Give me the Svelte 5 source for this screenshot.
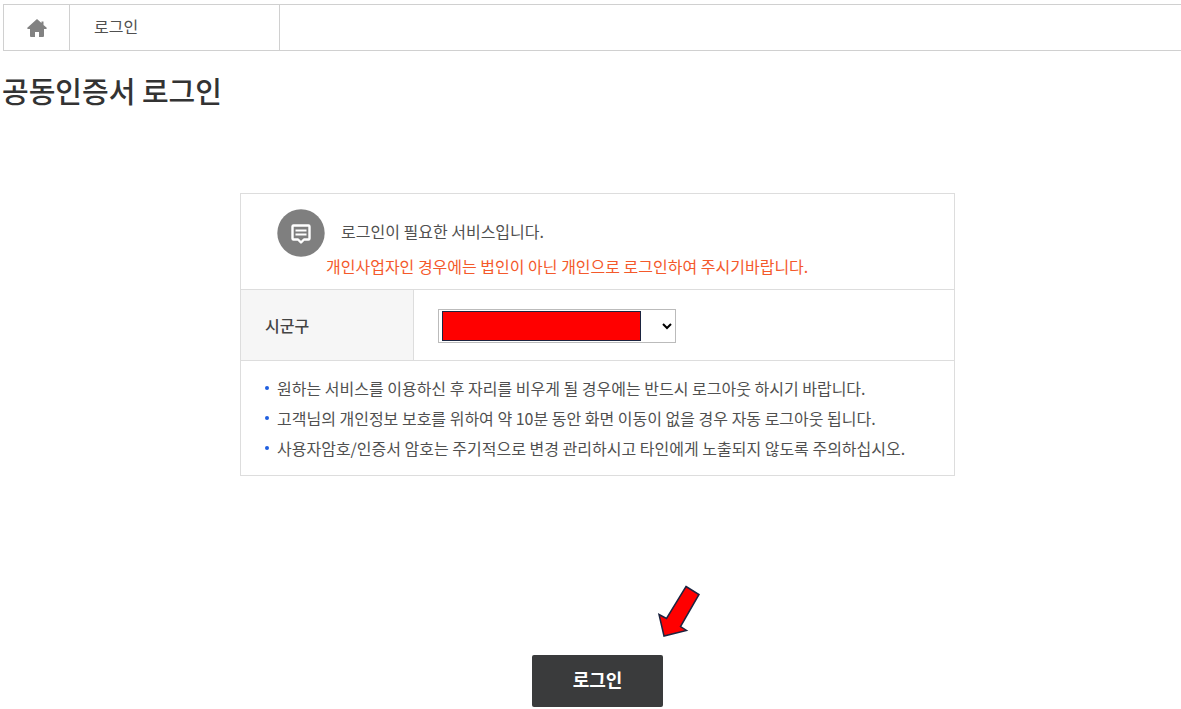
<script>
  let district = $state('');
  const notes = [
    '원하는 서비스를 이용하신 후 자리를 비우게 될 경우에는 반드시 로그아웃 하시기 바랍니다.',
    '고객님의 개인정보 보호를 위하여 약 10분 동안 화면 이동이 없을 경우 자동 로그아웃 됩니다.',
    '사용자암호/인증서 암호는 주기적으로 변경 관리하시고 타인에게 노출되지 않도록 주의하십시오.'
  ];
</script>

<nav class="crumbs">
  <a class="home" href="#home" aria-label="홈">
    <svg width="20" height="18" viewBox="0 0 20 18" aria-hidden="true">
      <path
        d="M10 0 0.300 8.800q-.3 1.200.7 1.200H3v7q0 1 1 1h4v-5h4v5h4q1 0 1-1V10h2q1 0 .7-1.200L16.500 5.900V2.500h-2v1.600z"
        fill="#828282"
      />
    </svg>
  </a>
  <a class="current" href="#login">로그인</a>
</nav>

<h1>공동인증서 로그인</h1>

<main>
  <section class="panel">
    <div class="intro">
      <svg class="badge" width="48" height="48" viewBox="0 0 48 48" aria-hidden="true">
        <circle cx="24" cy="24" r="23.700" fill="#7f7f7f" />
        <path
          d="M16.500 16.500h15q1 0 1 1v12q0 1-1 1H27l-3 3-3-3h-4.500q-1 0-1-1v-12q0-1 1-1z"
          fill="none"
          stroke="#fff"
          stroke-width="2.400"
          stroke-linejoin="round"
        />
        <path d="M18.500 21.500h11M18.500 25.500h11" stroke="#fff" stroke-width="2" />
      </svg>
      <div class="messages">
        <p class="lead">로그인이 필요한 서비스입니다.</p>
        <p class="warning">개인사업자인 경우에는 법인이 아닌 개인으로 로그인하여 주시기바랍니다.</p>
      </div>
    </div>

    <div class="field">
      <label for="district">시군구</label>
      <div class="control">
        <div class="picker">
          <select id="district" bind:value={district}>
            <option value=""></option>
          </select>
          <span class="mask"></span>
        </div>
      </div>
    </div>

    <ul>
      {#each notes as note}
        <li>{note}</li>
      {/each}
    </ul>
  </section>

  <div class="actions">
    <button type="button">로그인</button>
    <svg class="pointer" width="44" height="54" viewBox="0 0 44 54" aria-hidden="true">
      <path
        d="M29 2.500 42 10.500 23.500 42.500 29.500 46.500 7 52 2 30.500 9.500 34.500z"
        fill="#f00"
        stroke="#1c2440"
        stroke-width="1.500"
      />
    </svg>
  </div>
</main>

<style>
  :global(body) {
    background: #fff;
    color: #505050;
    font: 16px/30px 'Noto Sans CJK KR', sans-serif;
  }

  .crumbs {
    display: flex;
    box-sizing: border-box;
    height: 47px;
    margin: 4px 0 0 3px;
    border: 1px solid #d0d0d0;
    border-right: 0;
  }

  .crumbs a {
    display: flex;
    align-items: center;
    box-sizing: border-box;
    border-right: 1px solid #d0d0d0;
    color: #505050;
    text-decoration: none;
  }

  .home {
    width: 66px;
    justify-content: center;
  }

  .crumbs .current {
    width: 210px;
    padding: 0 24px 4px;
  }

  h1 {
    margin: 17px 0 0 2px;
    color: #333;
    font-size: 29px;
    font-weight: 500;
    line-height: 44px;
  }

  main {
    padding: 81px 0 0 14px;
  }

  .panel {
    box-sizing: border-box;
    max-width: 715px;
    margin: 0 auto;
    border: 1px solid #ddd;
  }

  .intro {
    display: flex;
    align-items: flex-start;
    padding: 15px 24px 5px 36px;
  }

  .badge {
    flex: none;
  }

  .messages {
    padding-top: 5px;
  }

  p {
    margin: 0;
    line-height: 35px;
  }

  .lead {
    padding-left: 16px;
  }

  .warning {
    padding-left: 1px;
    color: #f4592b;
  }

  .field {
    display: flex;
    border: solid #ddd;
    border-width: 1px 0;
  }

  label {
    display: flex;
    align-items: center;
    box-sizing: border-box;
    width: 173px;
    padding-left: 24px;
    border-right: 1px solid #ddd;
    background: #f6f6f6;
    color: #444;
    font-weight: 500;
  }

  .control {
    flex: 1;
    padding: 19px 24px 17px;
  }

  .picker {
    position: relative;
    max-width: 238px;
  }

  select {
    display: block;
    width: 100%;
    height: 34px;
    padding: 0;
    border: 1px solid #bbb;
    border-radius: 0;
    background: #fff;
    color: #000;
    font: inherit;
  }

  .mask {
    position: absolute;
    top: 2px;
    left: 4px;
    box-sizing: border-box;
    width: 199px;
    height: 30px;
    border: 1px solid #1c2440;
    background: #f00;
    pointer-events: none;
  }

  ul {
    margin: 0;
    padding: 12px 24px;
    list-style: none;
  }

  li {
    display: flex;
    align-items: center;
    gap: 8px;
  }

  li::before {
    content: '';
    flex: none;
    width: 4px;
    height: 4px;
    border-radius: 50%;
    background: #1f5fe0;
  }

  .actions {
    position: relative;
    width: 131px;
    margin: 179px auto 0;
  }

  button {
    display: block;
    width: 100%;
    height: 52px;
    padding: 0 0 4px;
    border: 0;
    border-radius: 2px;
    background: #3a3b3c;
    color: #fff;
    font: 700 18px/24px 'Noto Sans CJK KR', sans-serif;
  }

  .pointer {
    position: absolute;
    bottom: 69px;
    left: 125px;
    pointer-events: none;
  }
</style>
